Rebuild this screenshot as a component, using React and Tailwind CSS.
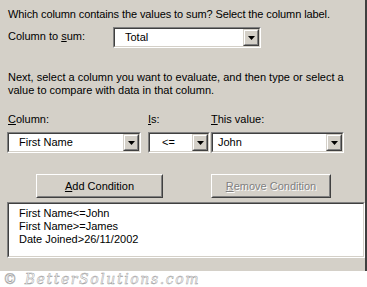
import React from 'react';

// sunken combo box in the old Windows classic look
const Combo = ({ value, width, pad }) => (
  <div
    className="flex h-[21px] border border-t-[#808080] border-l-[#808080] border-b-white border-r-white bg-white"
    style={{ width }}
  >
    <div className="flex flex-1 items-center border border-t-[#404040] border-l-[#404040] border-b-[#d4d0c8] border-r-[#d4d0c8]">
      <span className="flex-1 leading-[13px]" style={{ paddingLeft: pad }}>{value}</span>
      <div className="flex h-[17px] w-[16px] items-center justify-center border border-t-[#d4d0c8] border-l-[#d4d0c8] border-b-[#404040] border-r-[#404040] bg-[#d4d0c8]">
        <div className="flex h-full w-full items-center justify-center border border-t-white border-l-white border-b-[#808080] border-r-[#808080]">
          <svg width="7" height="4" viewBox="0 0 7 4">
            <path d="M0 0h7L3.5 4z" fill="#000" />
          </svg>
        </div>
      </div>
    </div>
  </div>
);

const Button = ({ children, disabled, width }) => (
  <div
    className="flex h-[24px] border border-t-white border-l-white border-b-[#404040] border-r-[#404040] bg-[#d4d0c8]"
    style={{ width }}
  >
    <div className="flex flex-1 items-center justify-center border border-t-[#d4d0c8] border-l-[#d4d0c8] border-b-[#808080] border-r-[#808080]">
      <span className={disabled ? 'text-[#808080] [text-shadow:1px_1px_0_#fff]' : 'text-black'}>{children}</span>
    </div>
  </div>
);

export default function App() {
  return (
    <div className="h-[287px] w-[367px] overflow-hidden bg-white font-['Liberation_Sans',sans-serif] text-[11px] leading-[13px] text-black">
      <div className="h-[271px] border-r-2 border-r-[#404040] bg-[#d4d0c8] pl-[7px] pt-[8px]">
        <p className="pl-[1px] tracking-[-0.1px]">Which column contains the values to sum? Select the column label.</p>

        <div className="mt-[6px] flex items-start">
          <span className="w-[106px] pl-[1px] pt-[3px]">
            Column to <span className="underline">s</span>um:
          </span>
          <Combo value="Total" width={148} pad={10} />
        </div>

        <p className="mt-[23px] pl-[1px]">
          Next, select a column you want to evaluate, and then type or select a
          <br />
          value to compare with data in that column.
        </p>

        <div className="mt-[16px] flex">
          <span className="w-[141px] pl-[1px]"><span className="underline">C</span>olumn:</span>
          <span className="w-[63px]"><span className="underline">I</span>s:</span>
          <span><span className="underline">T</span>his value:</span>
        </div>

        <div className="mt-[6px] flex">
          <div className="w-[141px]"><Combo value="First Name" width={134} pad={10} /></div>
          <div className="w-[63px]"><Combo value="<=" width={62} pad={12} /></div>
          <Combo value="John" width={133} pad={5} />
        </div>

        <div className="mt-[21px] flex">
          <div className="w-[204px] pl-[29px]">
            <Button width={127}><span className="underline">A</span>dd Condition</Button>
          </div>
          <Button width={120} disabled><span className="underline">R</span>emove Condition</Button>
        </div>

        <div className="mt-[4px] h-[56px] border border-t-[#808080] border-l-[#808080] border-b-white border-r-white">
          <div className="h-full border border-t-[#404040] border-l-[#404040] border-b-[#d4d0c8] border-r-[#d4d0c8] bg-white pl-[10px] pt-[3px]">
            <div>First Name&lt;=John</div>
            <div>First Name&gt;=James</div>
            <div>Date Joined&gt;26/11/2002</div>
          </div>
        </div>
      </div>

      <div className="pl-[3px] pt-[1px] font-['DejaVu_Serif',serif] text-[14px] italic leading-[15px] tracking-[1.6px] text-white [-webkit-text-stroke:0.5px_#a0a0a0]">
        © BetterSolutions.com
      </div>
    </div>
  );
}
